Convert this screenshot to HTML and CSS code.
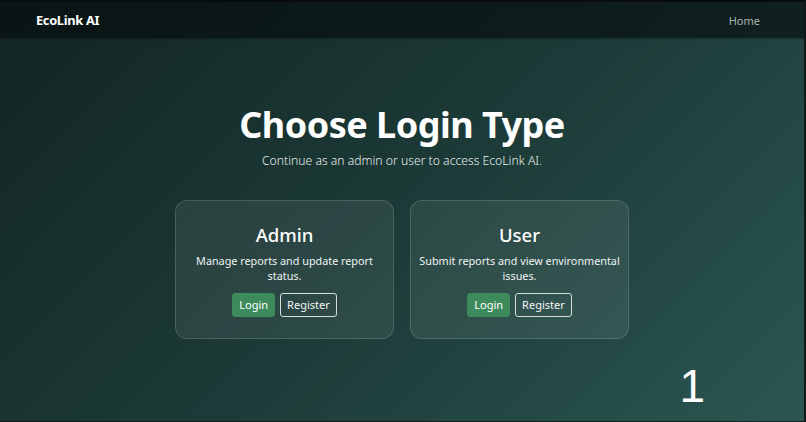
FILE: index.html
```html
<!DOCTYPE html>
<html lang="en">
<head>
<meta charset="utf-8">
<title>EcoLink AI - Choose Login Type</title>
<link rel="stylesheet" href="styles.css">
</head>
<body>
<div class="frame">
  <nav class="navbar">
    <a class="brand" href="#">EcoLink AI</a>
    <a class="nav-link" href="#">Home</a>
  </nav>
  <main class="main">
    <h1 class="title">Choose Login Type</h1>
    <p class="subtitle">Continue as an admin or user to access EcoLink AI.</p>
    <div class="cards">
      <section class="card">
        <h2 class="card-title">Admin</h2>
        <p class="card-text">Manage reports and update report status.</p>
        <div class="actions">
          <a class="btn btn-green" href="#">Login</a>
          <a class="btn btn-outline" href="#">Register</a>
        </div>
      </section>
      <section class="card">
        <h2 class="card-title">User</h2>
        <p class="card-text">Submit reports and view environmental issues.</p>
        <div class="actions">
          <a class="btn btn-green" href="#">Login</a>
          <a class="btn btn-outline" href="#">Register</a>
        </div>
      </section>
    </div>
  </main>
  <div class="badge">1</div>
</div>
</body>
</html>
```
FILE: styles.css
```css
* { box-sizing: border-box; }
html, body { margin: 0; height: 100%; }
body {
  background: #0b1111;
  font-family: "Noto Sans", "Open Sans", sans-serif;
  color: #fff;
  overflow: hidden;
}
.frame {
  position: relative;
  height: 422px;
  border-top: 2px solid #0a0d0d;
  border-right: 2px solid #0f1a19;
  border-bottom: 1px solid #10201e;
  background: linear-gradient(135deg, #122523 0%, #1c3a37 50%, #2b5651 100%);
  display: flex;
  flex-direction: column;
}
.navbar {
  height: 36px;
  display: flex;
  align-items: center;
  justify-content: space-between;
  padding: 0 44px 0 36px;
  background: rgba(5, 12, 12, 0.62);
  box-shadow: 0 1px 3px rgba(0,0,0,0.25);
}
.brand {
  color: #fff;
  text-decoration: none;
  font-weight: 700;
  font-size: 12.8px;
  letter-spacing: -0.3px;
}
.nav-link {
  color: #a9b3b2;
  text-decoration: none;
  font-size: 11px;
}
.main {
  display: flex;
  flex-direction: column;
  align-items: center;
  padding-top: 62px;
}
.title {
  margin: 0;
  font-size: 36px;
  font-weight: 700;
  line-height: 50px;
  letter-spacing: -0.5px;
}
.subtitle {
  margin: 0;
  margin-top: 2px;
  font-size: 12.2px;
  font-weight: 300;
  color: #e6eeed;
  line-height: 18px;
}
.cards {
  display: flex;
  gap: 16px;
  margin-top: 30px;
}
.card {
  width: 219px;
  height: 139px;
  border-radius: 12px;
  background: rgba(255,255,255,0.075);
  border: 1px solid rgba(255,255,255,0.14);
  display: flex;
  flex-direction: column;
  align-items: center;
  padding: 21px 8px 0;
  text-align: center;
}
.card-title {
  margin: 0;
  font-size: 18.5px;
  font-weight: 500;
  line-height: 26px;
}
.card-text {
  margin: 5px 0 0;
  font-size: 10.8px;
  line-height: 15px;
  color: #eef3f2;
}
.actions {
  display: flex;
  gap: 5px;
  margin-top: 10px;
}
.btn {
  height: 24px;
  padding: 0 6px;
  border-radius: 3px;
  font-size: 11px;
  line-height: 22px;
  text-decoration: none;
  color: #fff;
  border: 1px solid transparent;
}
.btn-green {
  background: #3d8a5c;
  border-color: #3d8a5c;
}
.btn-outline {
  border-color: #d6dedd;
  color: #f2f5f5;
}
.badge {
  position: absolute;
  right: 99px;
  bottom: 12px;
  font-family: "Liberation Sans", Arial, sans-serif;
  font-size: 46px;
  line-height: 46px;
  color: #fff;
}
```
